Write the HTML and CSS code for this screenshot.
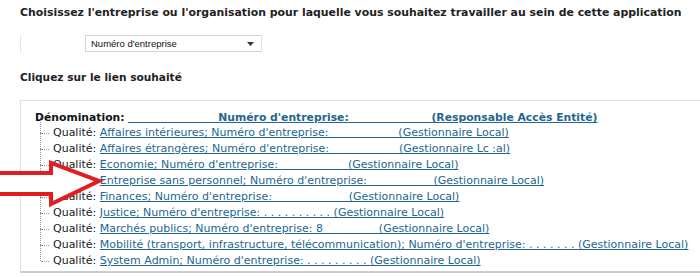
FILE: index.html
```html
<!DOCTYPE html>
<html>
<head>
    <title>Choix de l'entreprise</title>
    <link rel="stylesheet" href="styles.css">
</head>
<body>
    <div class="page">
        <h1 class="title">Choisissez l'entreprise ou l'organisation pour laquelle vous souhaitez travailler au sein de cette application</h1>

        <div class="picker">
            <div class="select">
                <span>Numéro d'entreprise</span>
                <svg class="caret" width="7" height="5" viewBox="0 0 7 5"><path d="M0 1h7L3.5 5z" fill="#333"/></svg>
            </div>
        </div>

        <h2 class="subtitle">Cliquez sur le lien souhaité</h2>

        <div class="panel">
            <div class="head">
                <b>Dénomination:</b>
                <a href="#" class="head-link">&nbsp;&nbsp;&nbsp;&nbsp;&nbsp;&nbsp;&nbsp;&nbsp;&nbsp;&nbsp;&nbsp;&nbsp;&nbsp;&nbsp;&nbsp;&nbsp;&nbsp;&nbsp;&nbsp;&nbsp;&nbsp;&nbsp;&nbsp;&nbsp;Numéro d'entreprise:&nbsp;&nbsp;&nbsp;&nbsp;&nbsp;&nbsp;&nbsp;&nbsp;&nbsp;&nbsp;&nbsp;&nbsp;&nbsp;&nbsp;&nbsp;&nbsp;&nbsp;&nbsp;&nbsp;&nbsp;&nbsp;&nbsp;(Responsable Accès Entité)</a>
            </div>
            <ul class="tree">
                <li><span class="label">Qualité:</span> <a href="#">Affaires intérieures; Numéro d'entreprise:&nbsp;&nbsp;&nbsp;&nbsp;&nbsp;&nbsp;&nbsp;&nbsp;&nbsp;&nbsp;&nbsp;&nbsp;&nbsp;&nbsp;&nbsp;&nbsp;&nbsp;&nbsp;&nbsp;&nbsp;(Gestionnaire Local)</a></li>
                <li><span class="label">Qualité:</span> <a href="#">Affaires étrangères; Numéro d'entreprise:&nbsp;&nbsp;&nbsp;&nbsp;&nbsp;&nbsp;&nbsp;&nbsp;&nbsp;&nbsp;&nbsp;&nbsp;&nbsp;&nbsp;&nbsp;&nbsp;&nbsp;&nbsp;&nbsp;&nbsp;(Gestionnaire Lc :al)</a></li>
                <li><span class="label">Qualité:</span> <a href="#">Economie; Numéro d'entreprise:&nbsp;&nbsp;&nbsp;&nbsp;&nbsp;&nbsp;&nbsp;&nbsp;&nbsp;&nbsp;&nbsp;&nbsp;&nbsp;&nbsp;&nbsp;&nbsp;&nbsp;&nbsp;&nbsp;&nbsp;(Gestionnaire Local)</a></li>
                <li><span class="label">Qualité:</span> <a href="#">Entreprise sans personnel; Numéro d'entreprise:&nbsp;&nbsp;&nbsp;&nbsp;&nbsp;&nbsp;&nbsp;&nbsp;&nbsp;&nbsp;&nbsp;&nbsp;&nbsp;&nbsp;&nbsp;&nbsp;&nbsp;&nbsp;&nbsp;(Gestionnaire Local)</a></li>
                <li><span class="label">Qualité:</span> <a href="#">Finances; Numéro d'entreprise:&nbsp;&nbsp;&nbsp;&nbsp;&nbsp;&nbsp;&nbsp;&nbsp;&nbsp;&nbsp;&nbsp;&nbsp;&nbsp;&nbsp;&nbsp;&nbsp;&nbsp;&nbsp;&nbsp;&nbsp;&nbsp;&nbsp;(Gestionnaire Local)</a></li>
                <li><span class="label">Qualité:</span> <a href="#">Justice; Numéro d'entreprise: . .&nbsp;. . . . . . . . (Gestionnaire Local)</a></li>
                <li><span class="label">Qualité:</span> <a href="#">Marchés publics; Numéro d'entreprise: 8&nbsp;&nbsp;&nbsp;&nbsp;&nbsp;&nbsp;&nbsp;&nbsp;&nbsp;&nbsp;&nbsp;&nbsp;&nbsp;&nbsp;&nbsp;&nbsp;(Gestionnaire Local)</a></li>
                <li><span class="label">Qualité:</span> <a href="#">Mobilité (transport, infrastructure, télécommunication); Numéro d'entreprise: . .&nbsp;. . . . . (Gestionnaire Local)</a></li>
                <li><span class="label">Qualité:</span> <a href="#">System Admin; Numéro d'entreprise: . .&nbsp;. . . . . . . (Gestionnaire Local)</a></li>
            </ul>
        </div>
    </div>

    <svg class="arrow" width="106" height="48" viewBox="0 0 106 48">
        <path d="M-4 13H51V3L99 21L51 44V34H-4Z" fill="#fff" stroke="#e11d22" stroke-width="4" stroke-linejoin="miter"/>
    </svg>
</body>
</html>
```

FILE: styles.css
```css
body {
    margin: 0;
    background: #fff;
    color: #222;
    font-family: Verdana, "DejaVu Sans", sans-serif;
    font-size: 11px;
    overflow: hidden;
}

.page {
    position: relative;
    padding: 5px 0 0 20px;
}

.title {
    margin: 0;
    font-size: 10.9px;
    line-height: 16px;
    font-weight: bold;
    white-space: nowrap;
}

.picker {
    margin-top: 14px;
    height: 18px;
    border-left: 1px solid #e4e4e4;
    padding-left: 64px;
}

.select {
    display: flex;
    align-items: center;
    justify-content: space-between;
    width: 163px;
    height: 15px;
    padding: 0 7px 0 5px;
    border: 1px solid #d4d4d4;
    border-right-color: #e0e0e0;
    font-family: "Liberation Sans", Arial, sans-serif;
    font-size: 9.5px;
    color: #111;
}

.subtitle {
    margin: 16px 0 0;
    font-size: 10.6px;
    line-height: 16px;
    font-weight: bold;
}

.panel {
    margin-top: 15px;
    width: 720px;
    border: 1px solid #dfe2e4;
    border-bottom: 2px solid #c9ced6;
    padding: 9px 0 2px 14px;
}

.head {
    line-height: 15px;
    font-size: 10.8px;
}

.head b {
    color: #111;
}

.head-link {
    font-weight: bold;
}

a {
    color: #23668f;
    text-decoration: underline;
}

.tree {
    list-style: none;
    margin: 0;
    padding: 0 0 0 5px;
}

.tree li {
    position: relative;
    height: 16px;
    line-height: 16px;
    padding-left: 13px;
    white-space: nowrap;
}

.label {
    color: #222;
}

.tree li::before {
    content: "";
    position: absolute;
    left: 0;
    top: -8px;
    height: 16px;
    border-left: 1px dotted #999;
}

.tree li::after {
    content: "";
    position: absolute;
    left: 1px;
    top: 8px;
    width: 8px;
    border-top: 1px dotted #999;
}

.arrow {
    position: absolute;
    left: 0;
    top: 160px;
}
```
